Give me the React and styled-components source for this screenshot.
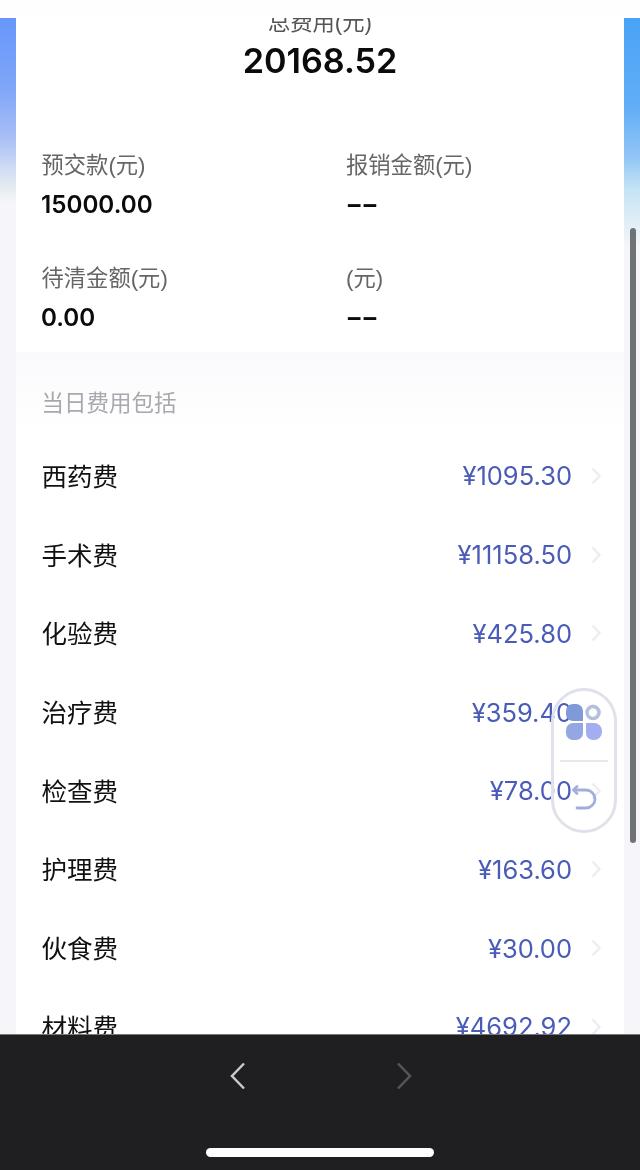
import React from 'react';
import styled, { createGlobalStyle } from 'styled-components';

const GlobalStyle = createGlobalStyle`
html, body {
  margin: 0;
  padding: 0;
  background: #f6f6fa;
  font-family: "Liberation Sans", "Noto Sans CJK SC", sans-serif;
}
`;

const Page = styled.div`
position: relative;
display: flex;
flex-direction: column;
width: 640px;
height: 1170px;
overflow: hidden;
filter: blur(0.45px);
`;

const TopStrip = styled.div`
height: 18px;
flex: none;
background: #fdfefd;
`;

const Viewport = styled.div`
flex: 1;
min-height: 0;
overflow: hidden;
padding: 0 16px;
background:
  linear-gradient(180deg, #6797fb 0, #7fa6f8 70px, #a9bff6 120px, #cfdcf5 150px, #e6ebf0 170px, #f6f6fa 185px) left top / 16px 100% no-repeat,
  linear-gradient(180deg, #49a3f6 0, #62aef7 90px, #93c6f5 140px, #c3e3f4 170px, #e2eef7 205px, #f6f6fa 230px) right top / 16px 100% no-repeat,
  #f6f6fa;
`;

const Summary = styled.section`
margin-top: -10px;
padding-bottom: 17px;
background: #fff;
`;

const HeroLabel = styled.div`
height: 30px;
line-height: 30px;
margin-bottom: 2.5px;
text-align: center;
font-size: 22.3px;
color: #555;
`;

const HeroValue = styled.div`
height: 40px;
line-height: 40px;
text-align: center;
font-family: Inter, "Liberation Sans", sans-serif;
font-size: 34.2px;
font-weight: 600;
color: #0b0b0d;
`;

const StatGrid = styled.div`
display: grid;
grid-template-columns: 304.5px 1fr;
row-gap: 42px;
margin-top: 70.5px;
padding: 0 25.5px;
`;

const Stat = styled.div`
display: flex;
flex-direction: column;
gap: 7px;
`;

const StatLabel = styled.div`
height: 30px;
line-height: 30px;
font-size: 22.3px;
color: #666;
`;

const StatValue = styled.div`
height: 34px;
line-height: ${(p) => (p.$empty ? '38px' : '34px')};
font-family: ${(p) => (p.$empty ? 'Roboto' : 'Inter')}, "Liberation Sans", sans-serif;
font-size: ${(p) => (p.$empty ? '25px' : '24.2px')};
font-weight: ${(p) => (p.$empty ? 700 : 600)};
margin-left: ${(p) => (p.$empty ? '0' : '-0.5px')};
color: #0b0b0d;
`;

const Breakdown = styled.section`
padding: 37px 23px 0 25.5px;
background: linear-gradient(180deg, #fafafc 0, #fdfdfe 50px, #fff 80px);
`;

const BreakdownTitle = styled.div`
height: 30px;
line-height: 30px;
margin-bottom: 17.6px;
font-size: 22.5px;
color: #a8a8ae;
`;

const Row = styled.div`
display: flex;
align-items: center;
height: 78.7px;
`;

const RowName = styled.span`
flex: 1;
padding-bottom: 3px;
font-size: 25.5px;
color: #111;
`;

const RowAmount = styled.span`
font-family: Inter, "Liberation Sans", sans-serif;
font-size: 25.5px;
color: #4a5cb8;
`;

const RowChevron = styled.svg`
width: 10px;
height: 18px;
margin-left: 19px;
fill: none;
stroke: #eeeef2;
stroke-width: 2.5;
`;

const ScrollThumb = styled.div`
position: absolute;
top: 228px;
left: 630px;
width: 6px;
height: 615px;
border-radius: 3px;
background: #6f7378;
`;

const FloatPill = styled.div`
position: absolute;
top: 688px;
left: 551px;
width: 66px;
height: 145px;
box-sizing: border-box;
display: flex;
flex-direction: column;
align-items: center;
border: 3px solid #dfe2ea;
border-radius: 33px;
`;

const PillIcon = styled.svg`
width: 38px;
height: 38px;
margin-top: 12px;
`;

const PillDivider = styled.div`
width: 48px;
height: 2px;
margin-top: 19px;
background: #e6e7ec;
`;

const PillBack = styled.svg`
width: 26px;
height: 26px;
margin-top: 23px;
fill: none;
stroke: #a3aedb;
stroke-width: 2.8;
stroke-linecap: round;
stroke-linejoin: round;
`;

const BottomBar = styled.nav`
flex: none;
position: relative;
height: 136px;
box-sizing: border-box;
display: flex;
flex-direction: column;
align-items: center;
border-top: 1px solid #77777a;
background: #1f1e20;
`;

const NavButtons = styled.div`
display: flex;
gap: 150px;
margin: 27px 0 0 2px;
`;

const NavChevron = styled.svg`
width: 16px;
height: 28px;
fill: none;
stroke: ${(p) => (p.$dim ? '#55555a' : '#c9c9cc')};
stroke-width: 2.5;
`;

const HomeIndicator = styled.div`
width: 228px;
height: 9px;
margin-top: 58px;
border-radius: 5px;
background: #fff;
`;

const stats = [
  { label: '预交款(元)', value: '15000.00' },
  { label: '报销金额(元)', value: null },
  { label: '待清金额(元)', value: '0.00' },
  { label: '(元)', value: null },
];

const fees = [
  { name: '西药费', amount: '¥1095.30' },
  { name: '手术费', amount: '¥11158.50' },
  { name: '化验费', amount: '¥425.80' },
  { name: '治疗费', amount: '¥359.40' },
  { name: '检查费', amount: '¥78.00' },
  { name: '护理费', amount: '¥163.60' },
  { name: '伙食费', amount: '¥30.00' },
  { name: '材料费', amount: '¥4692.92' },
];

const App = () => {
  return (
    <Page>
      <GlobalStyle />
      <TopStrip />
      <Viewport>
        <Summary>
          <HeroLabel>总费用(元)</HeroLabel>
          <HeroValue>20168.52</HeroValue>
          <StatGrid>
            {stats.map((s, i) => (
              <Stat key={i}>
                <StatLabel>{s.label}</StatLabel>
                <StatValue $empty={!s.value}>{s.value || '––'}</StatValue>
              </Stat>
            ))}
          </StatGrid>
        </Summary>
        <Breakdown>
          <BreakdownTitle>当日费用包括</BreakdownTitle>
          {fees.map((f) => (
            <Row key={f.name}>
              <RowName>{f.name}</RowName>
              <RowAmount>{f.amount}</RowAmount>
              <RowChevron viewBox="0 0 10 18">
                <path d="M1.5 1.5 8.5 9l-7 7.5" />
              </RowChevron>
            </Row>
          ))}
        </Breakdown>
      </Viewport>
      <BottomBar>
        <NavButtons>
          <NavChevron viewBox="0 0 16 28">
            <path d="M14 1.5 2 14l12 12.5" />
          </NavChevron>
          <NavChevron viewBox="0 0 16 28" $dim>
            <path d="M2 1.5 14 14 2 26.5" />
          </NavChevron>
        </NavButtons>
        <HomeIndicator />
      </BottomBar>
      <ScrollThumb />
      <FloatPill>
        <PillIcon viewBox="0 0 38 38">
          <path d="M1 8a7 7 0 0 1 7-7h3a7 7 0 0 1 7 7v10H8a7 7 0 0 1-7-7z" fill="#8099d8" />
          <circle cx="28" cy="9.5" r="6" fill="none" stroke="#b4bedd" strokeWidth="3.5" />
          <path d="M18 20v10a7 7 0 0 1-7 7H8a7 7 0 0 1-7-7v-3a7 7 0 0 1 7-7z" fill="#93a8e2" />
          <path d="M21 20h8a8 8 0 0 1 8 8v1a8 8 0 0 1-8 8h-1a7 7 0 0 1-7-7z" fill="#a3aef0" />
        </PillIcon>
        <PillDivider />
        <PillBack viewBox="0 0 26 26">
          <path d="M3 5h12a7.5 7.5 0 0 1 0 18H6" />
          <path d="M6 1.5 2.5 5 6 8.5" />
        </PillBack>
      </FloatPill>
    </Page>
  );
};

export default App;
